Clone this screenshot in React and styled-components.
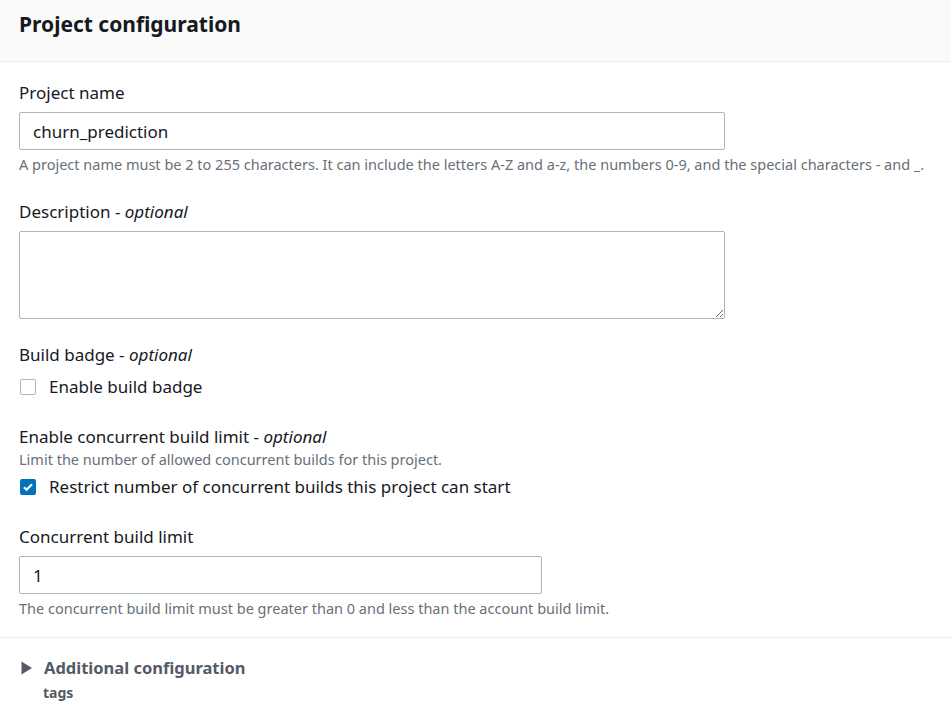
import styled, { createGlobalStyle } from "styled-components";

const GlobalStyle = createGlobalStyle`
  body {
    margin: 0;
    background: #fff;
    font-family: "Noto Sans", "Open Sans", sans-serif;
    color: #16191f;
  }
`;

const Panel = styled.section`
  width: 951px;
  background: #fff;
`;

const Header = styled.header`
  background: #fafafa;
  border-bottom: 1px solid #eaeded;
  height: 62px;
  box-sizing: border-box;
  padding: 9px 19px 0;
`;

const Title = styled.h2`
  margin: 0;
  font-size: 21px;
  line-height: 30px;
  font-weight: 700;
  color: #16191f;
`;

const Body = styled.div`
  padding: 19px 19px 0;
  display: flex;
  flex-direction: column;
`;

const Field = styled.div`
  display: flex;
  flex-direction: column;
  margin-bottom: ${({ $gap }) => $gap || 0}px;
`;

const Label = styled.label`
  font-size: 17px;
  line-height: 24px;
  color: #16191f;
  margin-bottom: ${({ $mb }) => $mb ?? 7}px;

  i {
    font-style: italic;
  }
`;

const Hint = styled.div`
  font-size: 14.5px;
  line-height: 20px;
  color: #687078;
  margin-top: ${({ $mt }) => $mt ?? 4}px;
`;

const TextInput = styled.input`
  width: ${({ $w }) => $w}px;
  height: 38px;
  box-sizing: border-box;
  border: 1px solid #aab7b8;
  border-radius: 2px;
  padding: 0 13px;
  font-family: inherit;
  font-size: 17px;
  color: #16191f;
  outline: none;
`;

const TextArea = styled.textarea`
  display: block;
  width: 706px;
  height: 88px;
  box-sizing: border-box;
  border: 1px solid #aab7b8;
  border-radius: 2px;
  padding: 8px 13px;
  font-family: inherit;
  font-size: 17px;
  resize: vertical;
  outline: none;
`;

const CheckRow = styled.label`
  display: flex;
  align-items: center;
  gap: 13px;
  font-size: 17px;
  line-height: 24px;
  color: #16191f;
  padding-left: 1px;
  margin-top: ${({ $mt }) => $mt ?? 0}px;
`;

const Box = styled.span`
  width: 16px;
  height: 16px;
  box-sizing: border-box;
  border-radius: 2px;
  display: inline-flex;
  align-items: center;
  justify-content: center;
  border: ${({ $on }) => ($on ? "none" : "1px solid #aab7b8")};
  background: ${({ $on }) => ($on ? "#0073bb" : "#fff")};
`;

const Divider = styled.hr`
  margin: 19px 0 0;
  border: none;
  border-top: 1px solid #eaeded;
`;

const Expander = styled.div`
  padding: 18px 19px 0;
`;

const ExpanderHead = styled.div`
  display: flex;
  align-items: center;
  gap: 11px;
  font-size: 16.5px;
  line-height: 24px;
  font-weight: 700;
  color: #545b64;
  padding-left: 2px;
`;

const Sub = styled.div`
  font-size: 14px;
  font-weight: 700;
  color: #545b64;
  padding-left: 24px;
  line-height: 20px;
  margin-top: 3px;
`;

const Checkbox = ({ checked, mt, children }) => (
  <CheckRow $mt={mt}>
    <Box $on={checked}>
      {checked && (
        <svg width="12" height="12" viewBox="0 0 12 12">
          <path d="M2 6.2l2.6 2.6L10 3.2" fill="none" stroke="#fff" strokeWidth="2.2" />
        </svg>
      )}
    </Box>
    {children}
  </CheckRow>
);

export default function App() {
  return (
    <Panel>
      <GlobalStyle />
      <Header>
        <Title>Project configuration</Title>
      </Header>
      <Body>
        <Field $gap={26}>
          <Label>Project name</Label>
          <TextInput $w={706} defaultValue="churn_prediction" />
          <Hint>
            A project name must be 2 to 255 characters. It can include the letters A-Z and a-z, the
            numbers 0-9, and the special characters - and _.
          </Hint>
        </Field>
        <Field $gap={24}>
          <Label>
            Description - <i>optional</i>
          </Label>
          <TextArea />
        </Field>
        <Field $gap={26}>
          <Label $mb={0}>
            Build badge - <i>optional</i>
          </Label>
          <Checkbox mt={8}>Enable build badge</Checkbox>
        </Field>
        <Field $gap={26}>
          <Label $mb={0}>
            Enable concurrent build limit - <i>optional</i>
          </Label>
          <Hint $mt={0}>Limit the number of allowed concurrent builds for this project.</Hint>
          <Checkbox checked mt={6}>
            Restrict number of concurrent builds this project can start
          </Checkbox>
        </Field>
        <Field>
          <Label>Concurrent build limit</Label>
          <TextInput $w={523} defaultValue="1" />
          <Hint>The concurrent build limit must be greater than 0 and less than the account build limit.</Hint>
        </Field>
      </Body>
      <Divider />
      <Expander>
        <ExpanderHead>
          <svg width="12" height="14" viewBox="0 0 12 14">
            <path d="M0.5 0.5l10.5 6.5-10.5 6.5z" fill="#545b64" />
          </svg>
          Additional configuration
        </ExpanderHead>
        <Sub>tags</Sub>
      </Expander>
    </Panel>
  );
}
